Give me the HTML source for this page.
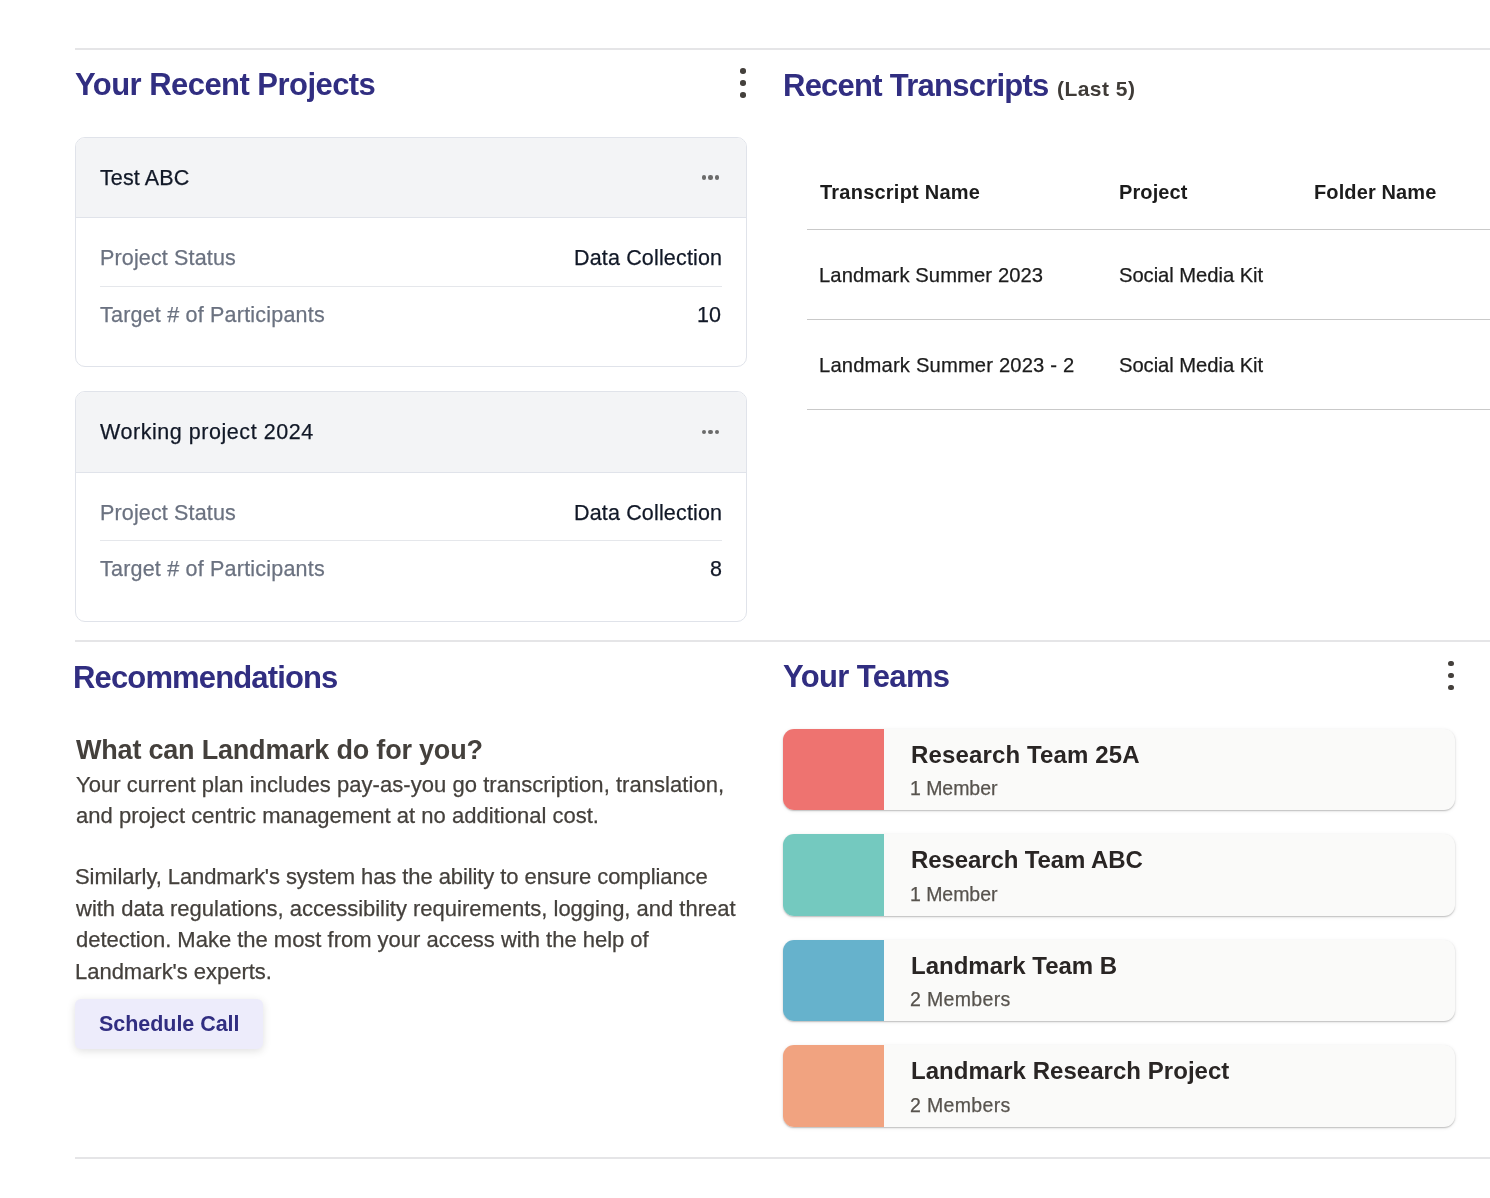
<!DOCTYPE html>
<html><head><meta charset="utf-8"><title>Dashboard</title>
<style>
html,body{margin:0;padding:0;background:#fff;width:1490px;height:1198px;overflow:hidden;position:relative}
body{font-family:'Liberation Sans', sans-serif}
.t{position:absolute;white-space:nowrap;font-family:'Liberation Sans', sans-serif;will-change:transform}
</style></head><body>
<div style="position:absolute;left:75px;top:48px;width:1415px;height:2px;background:#e5e5e7"></div>
<div style="position:absolute;left:740px;top:68.4px;width:5.6px;height:5.6px;border-radius:50%;background:#44403c"></div>
<div style="position:absolute;left:740px;top:80.4px;width:5.6px;height:5.6px;border-radius:50%;background:#44403c"></div>
<div style="position:absolute;left:740px;top:92.4px;width:5.6px;height:5.6px;border-radius:50%;background:#44403c"></div>
<div style="position:absolute;left:75px;top:137px;width:672px;height:230px;box-sizing:border-box;border:1px solid #e0e3ea;border-radius:10px;background:#fff"></div>
<div style="position:absolute;left:76px;top:138px;width:670px;height:80px;background:#f3f4f6;border-bottom:1px solid #e0e3ea;border-radius:9px 9px 0 0;box-sizing:border-box"></div>
<div style="position:absolute;left:701.75px;top:175.25px;width:4.5px;height:4.5px;border-radius:50%;background:#6b6b6b"></div>
<div style="position:absolute;left:708.25px;top:175.25px;width:4.5px;height:4.5px;border-radius:50%;background:#6b6b6b"></div>
<div style="position:absolute;left:714.75px;top:175.25px;width:4.5px;height:4.5px;border-radius:50%;background:#6b6b6b"></div>
<div style="position:absolute;left:100px;top:286px;width:622px;height:1px;background:#e5e7eb"></div>
<div style="position:absolute;left:75px;top:391px;width:672px;height:231px;box-sizing:border-box;border:1px solid #e0e3ea;border-radius:10px;background:#fff"></div>
<div style="position:absolute;left:76px;top:392px;width:670px;height:81px;background:#f3f4f6;border-bottom:1px solid #e0e3ea;border-radius:9px 9px 0 0;box-sizing:border-box"></div>
<div style="position:absolute;left:701.75px;top:429.75px;width:4.5px;height:4.5px;border-radius:50%;background:#6b6b6b"></div>
<div style="position:absolute;left:708.25px;top:429.75px;width:4.5px;height:4.5px;border-radius:50%;background:#6b6b6b"></div>
<div style="position:absolute;left:714.75px;top:429.75px;width:4.5px;height:4.5px;border-radius:50%;background:#6b6b6b"></div>
<div style="position:absolute;left:100px;top:540px;width:622px;height:1px;background:#e5e7eb"></div>
<div style="position:absolute;left:807px;top:229px;width:683px;height:1px;background:#c9c9c9"></div>
<div style="position:absolute;left:807px;top:319px;width:683px;height:1px;background:#c9c9c9"></div>
<div style="position:absolute;left:807px;top:409px;width:683px;height:1px;background:#c9c9c9"></div>
<div style="position:absolute;left:75px;top:640px;width:1415px;height:2px;background:#e5e5e7"></div>
<div style="position:absolute;left:1448.2px;top:660.7px;width:5.6px;height:5.6px;border-radius:50%;background:#44403c"></div>
<div style="position:absolute;left:1448.2px;top:672.7px;width:5.6px;height:5.6px;border-radius:50%;background:#44403c"></div>
<div style="position:absolute;left:1448.2px;top:684.7px;width:5.6px;height:5.6px;border-radius:50%;background:#44403c"></div>
<div style="position:absolute;left:75px;top:999px;width:188px;height:50px;background:#edecfb;border-radius:6px;box-shadow:0 2px 8px rgba(0,0,0,0.13)"></div>
<div style="position:absolute;left:783px;top:729px;width:672px;height:81px;background:#fafaf9;border-radius:11px;box-shadow:0 1px 1.5px rgba(0,0,0,0.22),0 1px 4px rgba(0,0,0,0.08)"></div>
<div style="position:absolute;left:783px;top:729px;width:101px;height:81px;background:#ee7370;border-radius:11px 0 0 11px"></div>
<div style="position:absolute;left:783px;top:834px;width:672px;height:82px;background:#fafaf9;border-radius:11px;box-shadow:0 1px 1.5px rgba(0,0,0,0.22),0 1px 4px rgba(0,0,0,0.08)"></div>
<div style="position:absolute;left:783px;top:834px;width:101px;height:82px;background:#74c9bf;border-radius:11px 0 0 11px"></div>
<div style="position:absolute;left:783px;top:940px;width:672px;height:81px;background:#fafaf9;border-radius:11px;box-shadow:0 1px 1.5px rgba(0,0,0,0.22),0 1px 4px rgba(0,0,0,0.08)"></div>
<div style="position:absolute;left:783px;top:940px;width:101px;height:81px;background:#66b2cc;border-radius:11px 0 0 11px"></div>
<div style="position:absolute;left:783px;top:1045px;width:672px;height:82px;background:#fafaf9;border-radius:11px;box-shadow:0 1px 1.5px rgba(0,0,0,0.22),0 1px 4px rgba(0,0,0,0.08)"></div>
<div style="position:absolute;left:783px;top:1045px;width:101px;height:82px;background:#f1a380;border-radius:11px 0 0 11px"></div>
<div style="position:absolute;left:75px;top:1157px;width:1415px;height:2px;background:#e5e5e7"></div>
<div class="t" style="left:75.00px;top:69px;font-size:31px;line-height:31px;font-weight:700;color:#312e81;letter-spacing:-0.547px;">Your Recent Projects</div>
<div class="t" style="left:783.40px;top:70px;font-size:31px;line-height:31px;font-weight:700;color:#312e81;letter-spacing:-0.753px;">Recent Transcripts</div>
<div class="t" style="left:1057.20px;top:78px;font-size:21px;line-height:21px;font-weight:700;color:#3f3b37;letter-spacing:0.457px;">(Last 5)</div>
<div class="t" style="left:100.00px;top:168px;font-size:21.5px;line-height:21.5px;font-weight:400;color:#111827;letter-spacing:0.114px;-webkit-text-stroke:0.25px #111827;">Test ABC</div>
<div class="t" style="left:99.93px;top:248px;font-size:21.5px;line-height:21.5px;font-weight:400;color:#6b7280;letter-spacing:0.148px;-webkit-text-stroke:0.25px #6b7280;">Project Status</div>
<div class="t" style="left:573.70px;top:248px;font-size:21.5px;line-height:21.5px;font-weight:400;color:#111827;letter-spacing:0.160px;-webkit-text-stroke:0.25px #111827;">Data Collection</div>
<div class="t" style="left:100.00px;top:305px;font-size:21.5px;line-height:21.5px;font-weight:400;color:#6b7280;letter-spacing:0.209px;-webkit-text-stroke:0.25px #6b7280;">Target # of Participants</div>
<div class="t" style="left:697.40px;top:305px;font-size:21.5px;line-height:21.5px;font-weight:400;color:#111827;-webkit-text-stroke:0.25px #111827;">10</div>
<div class="t" style="left:100.00px;top:422px;font-size:21.5px;line-height:21.5px;font-weight:400;color:#111827;letter-spacing:0.547px;-webkit-text-stroke:0.25px #111827;">Working project 2024</div>
<div class="t" style="left:99.93px;top:503px;font-size:21.5px;line-height:21.5px;font-weight:400;color:#6b7280;letter-spacing:0.148px;-webkit-text-stroke:0.25px #6b7280;">Project Status</div>
<div class="t" style="left:573.70px;top:503px;font-size:21.5px;line-height:21.5px;font-weight:400;color:#111827;letter-spacing:0.160px;-webkit-text-stroke:0.25px #111827;">Data Collection</div>
<div class="t" style="left:100.00px;top:559px;font-size:21.5px;line-height:21.5px;font-weight:400;color:#6b7280;letter-spacing:0.209px;-webkit-text-stroke:0.25px #6b7280;">Target # of Participants</div>
<div class="t" style="left:709.60px;top:559px;font-size:21.5px;line-height:21.5px;font-weight:400;color:#111827;-webkit-text-stroke:0.25px #111827;">8</div>
<div class="t" style="left:819.50px;top:182px;font-size:20px;line-height:20px;font-weight:700;color:#1c1c1c;letter-spacing:0.229px;">Transcript Name</div>
<div class="t" style="left:1119.44px;top:182px;font-size:20px;line-height:20px;font-weight:700;color:#1c1c1c;letter-spacing:0.107px;">Project</div>
<div class="t" style="left:1313.92px;top:182px;font-size:20px;line-height:20px;font-weight:700;color:#1c1c1c;letter-spacing:0.112px;">Folder Name</div>
<div class="t" style="left:818.84px;top:265px;font-size:20.2px;line-height:20.2px;font-weight:400;color:#1c1c1c;letter-spacing:0.101px;-webkit-text-stroke:0.25px #1c1c1c;">Landmark Summer 2023</div>
<div class="t" style="left:1118.96px;top:265px;font-size:20.2px;line-height:20.2px;font-weight:400;color:#1c1c1c;letter-spacing:-0.043px;-webkit-text-stroke:0.25px #1c1c1c;">Social Media Kit</div>
<div class="t" style="left:818.84px;top:355px;font-size:20.2px;line-height:20.2px;font-weight:400;color:#1c1c1c;letter-spacing:0.167px;-webkit-text-stroke:0.25px #1c1c1c;">Landmark Summer 2023 - 2</div>
<div class="t" style="left:1118.96px;top:355px;font-size:20.2px;line-height:20.2px;font-weight:400;color:#1c1c1c;letter-spacing:-0.043px;-webkit-text-stroke:0.25px #1c1c1c;">Social Media Kit</div>
<div class="t" style="left:73.10px;top:662px;font-size:31px;line-height:31px;font-weight:700;color:#312e81;letter-spacing:-0.857px;">Recommendations</div>
<div class="t" style="left:782.74px;top:661px;font-size:31px;line-height:31px;font-weight:700;color:#312e81;letter-spacing:-0.640px;">Your Teams</div>
<div class="t" style="left:75.50px;top:737px;font-size:27px;line-height:27px;font-weight:700;color:#44403c;letter-spacing:-0.200px;">What can Landmark do for you?</div>
<div class="t" style="left:75.50px;top:774px;font-size:22px;line-height:22px;font-weight:400;color:#44403c;letter-spacing:0.048px;-webkit-text-stroke:0.25px #44403c;">Your current plan includes pay-as-you go transcription, translation,</div>
<div class="t" style="left:75.50px;top:805px;font-size:22px;line-height:22px;font-weight:400;color:#44403c;letter-spacing:0.015px;-webkit-text-stroke:0.25px #44403c;">and project centric management at no additional cost.</div>
<div class="t" style="left:74.70px;top:866px;font-size:22px;line-height:22px;font-weight:400;color:#44403c;letter-spacing:-0.088px;-webkit-text-stroke:0.25px #44403c;">Similarly, Landmark's system has the ability to ensure compliance</div>
<div class="t" style="left:75.70px;top:898px;font-size:22px;line-height:22px;font-weight:400;color:#44403c;letter-spacing:-0.012px;-webkit-text-stroke:0.25px #44403c;">with data regulations, accessibility requirements, logging, and threat</div>
<div class="t" style="left:75.50px;top:929px;font-size:22px;line-height:22px;font-weight:400;color:#44403c;letter-spacing:-0.014px;-webkit-text-stroke:0.25px #44403c;">detection. Make the most from your access with the help of</div>
<div class="t" style="left:74.70px;top:961px;font-size:22px;line-height:22px;font-weight:400;color:#44403c;letter-spacing:-0.027px;-webkit-text-stroke:0.25px #44403c;">Landmark's experts.</div>
<div class="t" style="left:98.96px;top:1014px;font-size:21.5px;line-height:21.5px;font-weight:700;color:#312e81;letter-spacing:-0.040px;">Schedule Call</div>
<div class="t" style="left:910.62px;top:743px;font-size:24px;line-height:24px;font-weight:700;color:#292524;letter-spacing:0.145px;">Research Team 25A</div>
<div class="t" style="left:910.20px;top:779px;font-size:19.5px;line-height:19.5px;font-weight:400;color:#57534e;letter-spacing:-0.046px;-webkit-text-stroke:0.25px #57534e;">1 Member</div>
<div class="t" style="left:910.62px;top:848px;font-size:24px;line-height:24px;font-weight:700;color:#292524;letter-spacing:-0.105px;">Research Team ABC</div>
<div class="t" style="left:910.20px;top:885px;font-size:19.5px;line-height:19.5px;font-weight:400;color:#57534e;letter-spacing:-0.046px;-webkit-text-stroke:0.25px #57534e;">1 Member</div>
<div class="t" style="left:910.62px;top:954px;font-size:24px;line-height:24px;font-weight:700;color:#292524;letter-spacing:-0.006px;">Landmark Team B</div>
<div class="t" style="left:910.20px;top:990px;font-size:19.5px;line-height:19.5px;font-weight:400;color:#57534e;letter-spacing:0.340px;-webkit-text-stroke:0.25px #57534e;">2 Members</div>
<div class="t" style="left:910.62px;top:1059px;font-size:24px;line-height:24px;font-weight:700;color:#292524;letter-spacing:0.037px;">Landmark Research Project</div>
<div class="t" style="left:910.20px;top:1096px;font-size:19.5px;line-height:19.5px;font-weight:400;color:#57534e;letter-spacing:0.340px;-webkit-text-stroke:0.25px #57534e;">2 Members</div>
</body></html>
